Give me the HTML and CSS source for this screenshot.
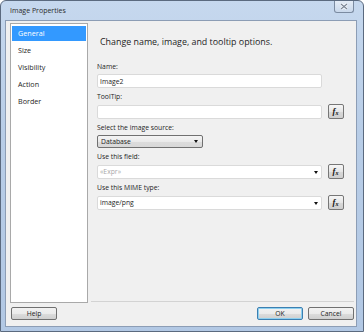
FILE: index.html
```html
<!DOCTYPE html>
<html lang="en">
<head>
  <meta charset="UTF-8">
  <title>Image Properties</title>
  <link rel="stylesheet" href="styles.css">
</head>
<body>
  <div class="window">
    <!-- Title bar -->
    <div class="titlebar">
      <span class="title">Image Properties</span>
      <span class="close">
        <svg width="8" height="7" viewBox="0 0 8 7">
          <path d="M1 1 L7 6 M7 1 L1 6" stroke="#fff" stroke-width="2.6" />
          <path d="M1 1 L7 6 M7 1 L1 6" stroke="#7a8696" stroke-width="1.2" />
        </svg>
      </span>
    </div>

    <div class="client">
      <div class="main">
        <!-- Page list -->
        <ul class="nav">
          <li class="active">General</li>
          <li>Size</li>
          <li>Visibility</li>
          <li>Action</li>
          <li>Border</li>
        </ul>

        <!-- General page -->
        <div class="content">
          <h1 class="heading">Change name, image, and tooltip options.</h1>

          <div class="group">
            <div class="label">Name:</div>
            <div class="row">
              <input class="text" type="text" value="Image2" readonly>
            </div>
          </div>

          <div class="group">
            <div class="label">ToolTip:</div>
            <div class="row">
              <input class="text" type="text" value="" readonly>
              <button class="fx"><i>f</i><i class="x">x</i></button>
            </div>
          </div>

          <div class="group">
            <div class="label">Select the image source:</div>
            <div class="row">
              <div class="select">Database<span class="arrow"></span></div>
            </div>
          </div>

          <div class="group">
            <div class="label">Use this field:</div>
            <div class="row">
              <div class="combo placeholder">&laquo;Expr&raquo;<span class="arrow"></span></div>
              <button class="fx"><i>f</i><i class="x">x</i></button>
            </div>
          </div>

          <div class="group">
            <div class="label">Use this MIME type:</div>
            <div class="row">
              <div class="combo">image/png<span class="arrow"></span></div>
              <button class="fx"><i>f</i><i class="x">x</i></button>
            </div>
          </div>
        </div>
      </div>

      <!-- Dialog buttons -->
      <div class="footer">
        <button class="btn">Help</button>
        <div class="spacer"></div>
        <button class="btn default">OK</button>
        <button class="btn">Cancel</button>
      </div>
    </div>
  </div>
</body>
</html>
```

FILE: styles.css
```css
body {
  margin: 0;
  padding: 0;
  font-family: "Open Sans", "Noto Sans", sans-serif;
  color: #1e1e1e;
  background-color: #fff;
}

.window {
  width: 364px;
  height: 332px;
  box-sizing: border-box;
  border: 1px solid #5b6a7f;
  border-radius: 6px 6px 0 0;
  background: linear-gradient(to bottom, #c6d8ee 0%, #b8cde7 40%, #b2c8e4 100%);
  padding: 0 6px 4px 4px;
  display: flex;
  flex-direction: column;
}

.titlebar {
  height: 19px;
  display: flex;
  align-items: flex-start;
}

.title {
  line-height: 19px;
  padding-left: 5px;
  font-size: 7px;
  color: #2b2b2b;
}

.close {
  margin-left: auto;
  margin-right: 3px;
  width: 20px;
  height: 12px;
  box-sizing: border-box;
  border: 1px solid #7b8ba1;
  border-top: none;
  border-radius: 0 0 3px 3px;
  background: linear-gradient(to bottom, #e4ecf6, #c9d8eb);
  display: flex;
  justify-content: center;
  align-items: center;
}

.client {
  flex: 1;
  border: 1px solid #8c9db5;
  background-color: #f0f0f0;
  display: flex;
  flex-direction: column;
}

.main {
  flex: 1;
  display: flex;
  padding: 2px 0 0 4px;
}

.nav {
  list-style: none;
  margin: 0;
  padding: 2px 1px;
  width: 78px;
  box-sizing: border-box;
  background-color: #fff;
  border: 1px solid #a9a9a9;
}

.nav li {
  height: 15px;
  line-height: 15px;
  margin-bottom: 2px;
  padding-left: 6px;
  font-size: 7.2px;
  color: #1e1e1e;
}

.nav li.active {
  background-color: #3399ff;
  color: #fff;
}

.content {
  flex: 1;
  margin: 0 2px 1px 3px;
  padding: 11px 0 0 6px;
  border-bottom: 1px solid #d3d3d3;
}

.heading {
  margin: 0 0 12px 3px;
  font-size: 8.9px;
  font-weight: normal;
  line-height: 16px;
  color: #1e1e1e;
}

.group {
  margin-bottom: 4px;
}

.label {
  font-size: 6.8px;
  line-height: 10px;
  margin-bottom: 2px;
}

.row {
  display: flex;
  align-items: center;
  gap: 6px;
}

.text,
.combo {
  width: 225px;
  height: 14px;
  box-sizing: border-box;
  margin: 0;
  padding: 0 0 0 2px;
  border: 1px solid #dadada;
  border-radius: 2px;
  background-color: #fff;
  font-family: inherit;
  font-size: 6.8px;
  color: #1e1e1e;
  outline: none;
}

.combo {
  position: relative;
  line-height: 12px;
}

.combo.placeholder {
  color: #a8a8a8;
}

.arrow {
  position: absolute;
  right: 3px;
  top: 5px;
  width: 0;
  height: 0;
  border-left: 2.5px solid transparent;
  border-right: 2.5px solid transparent;
  border-top: 3px solid #111;
}

.select {
  position: relative;
  width: 106px;
  height: 13px;
  box-sizing: border-box;
  padding-left: 3px;
  border: 1px solid #707070;
  border-radius: 2px;
  background: linear-gradient(to bottom, #f4f4f4 0%, #eaeaea 50%, #dcdcdc 51%, #d8d8d8 100%);
  font-size: 6.8px;
  line-height: 11px;
}

.select .arrow {
  right: 4px;
  top: 4px;
}

.fx {
  width: 16px;
  height: 15px;
  box-sizing: border-box;
  margin: 0;
  padding: 0 1px 0 0;
  border: 1px solid #767676;
  border-radius: 2px;
  background: linear-gradient(to bottom, #f6f6f6 0%, #e6e6e6 50%, #d8d8d8 51%, #cfcfcf 100%);
  font-family: "Liberation Serif", serif;
  font-size: 8.5px;
  font-weight: bold;
  line-height: 12px;
  color: #111;
}

.fx .x {
  font-size: 6px;
  position: relative;
  top: 1px;
}

.footer {
  height: 23px;
  box-sizing: border-box;
  padding: 4px 2px 0 5px;
  display: flex;
  align-items: flex-start;
}

.spacer {
  flex: 1;
}

.btn {
  width: 46px;
  height: 13px;
  margin: 0 0 0 5px;
  padding: 0;
  box-sizing: border-box;
  border: 1px solid #707070;
  border-radius: 2px;
  background: linear-gradient(to bottom, #f2f2f2 0%, #ebebeb 50%, #dddddd 51%, #cfcfcf 100%);
  font-family: inherit;
  font-size: 6.8px;
  color: #1e1e1e;
}

.footer .btn:first-child {
  margin-left: 0;
}

.btn.default {
  border-color: #3c7fb1;
  box-shadow: inset 0 0 0 1px #8ed0f0;
}
```
